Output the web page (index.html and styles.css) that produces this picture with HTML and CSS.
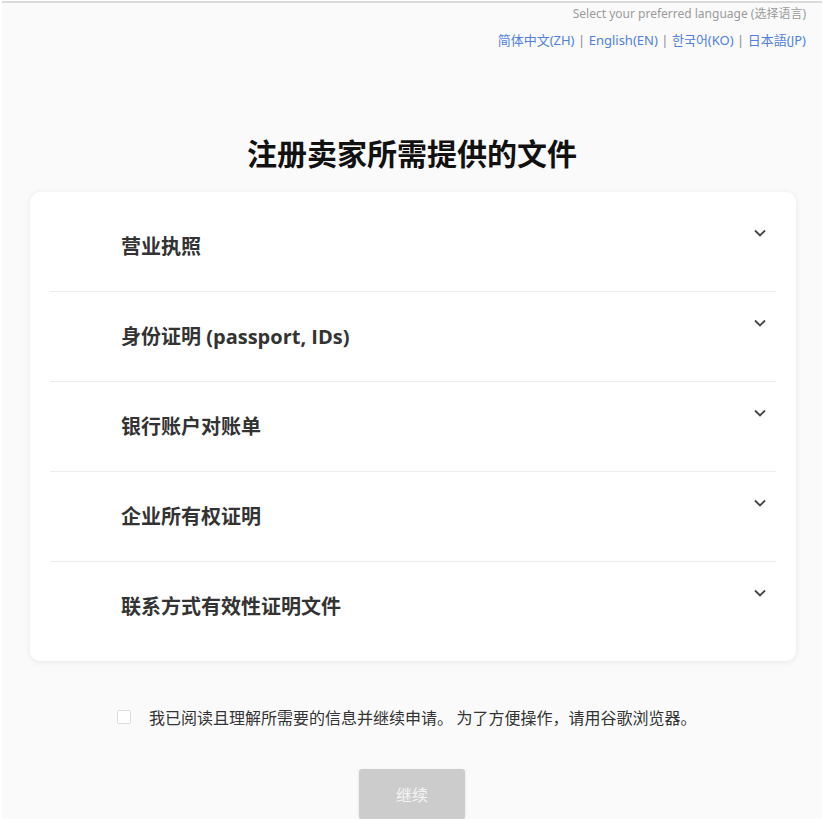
FILE: index.html
```html
<!DOCTYPE html>
<html lang="zh-CN">
<head>
<meta charset="utf-8">
<title>注册卖家所需提供的文件</title>
<link rel="stylesheet" href="styles.css">
</head>
<body>
<div class="page">
  <div class="lang">
    <div class="lang-hint">Select your preferred language (选择语言)</div>
    <div class="lang-links">
      <a class="lang-link">简体中文(ZH)</a><span class="sep">|</span><a class="lang-link">English(EN)</a><span class="sep">|</span><a class="lang-link">한국어(KO)</a><span class="sep">|</span><a class="lang-link">日本語(JP)</a>
    </div>
  </div>

  <h1 class="title">注册卖家所需提供的文件</h1>

  <div class="card">
    <div class="row"><span class="row-title">营业执照</span><svg class="chev" viewBox="0 0 12 8"><path d="M1 1.5 L6 6.5 L11 1.5" /></svg></div>
    <div class="row"><span class="row-title">身份证明 (passport, IDs)</span><svg class="chev" viewBox="0 0 12 8"><path d="M1 1.5 L6 6.5 L11 1.5" /></svg></div>
    <div class="row"><span class="row-title">银行账户对账单</span><svg class="chev" viewBox="0 0 12 8"><path d="M1 1.5 L6 6.5 L11 1.5" /></svg></div>
    <div class="row"><span class="row-title">企业所有权证明</span><svg class="chev" viewBox="0 0 12 8"><path d="M1 1.5 L6 6.5 L11 1.5" /></svg></div>
    <div class="row"><span class="row-title">联系方式有效性证明文件</span><svg class="chev" viewBox="0 0 12 8"><path d="M1 1.5 L6 6.5 L11 1.5" /></svg></div>
  </div>

  <label class="agree">
    <span class="box"></span>
    <span class="agree-text">我已阅读且理解所需要的信息并继续申请。 为了方便操作，请用谷歌浏览器。</span>
  </label>

  <div class="actions">
    <button class="btn" type="button">继续</button>
  </div>
</div>
</body>
</html>
```

FILE: styles.css
```css
html, body {
  margin: 0;
  padding: 0;
  background: #ffffff;
}

body {
  font-family: "Noto Sans", "Noto Sans CJK SC", "Noto Sans CJK KR", "Noto Sans CJK JP", sans-serif;
  color: #333;
}

.page {
  margin: 1px 0 0 2px;
  width: 820px;
  height: 818px;
  border-top: 2px solid #dadada;
  background: #fafafa;
  overflow: hidden;
  box-sizing: border-box;
}

.lang {
  text-align: right;
  padding: 3px 16px 0 0;
}

.lang-hint {
  font-size: 12px;
  line-height: 16px;
  color: #9a9a9a;
}

.lang-links {
  margin-top: 9px;
  font-size: 13px;
  line-height: 18px;
  color: #4f80dc;
}

.lang-link {
  color: #4f80dc;
  text-decoration: none;
}

.sep {
  color: #8a8a8a;
  margin: 0 3.5px;
}

.title {
  margin: 83px 0 0;
  text-align: center;
  font-family: "Noto Sans CJK SC", sans-serif;
  font-size: 30px;
  line-height: 40px;
  font-weight: 700;
  color: #111;
}

.card {
  margin: 20px 0 0 28px;
  width: 766px;
  padding: 10px 20px;
  box-sizing: border-box;
  background: #fff;
  border-radius: 10px;
  box-shadow: 0 1px 6px rgba(0, 0, 0, 0.08);
}

.row {
  height: 89px;
  border-bottom: 1px solid #ececec;
  display: flex;
  justify-content: space-between;
  align-items: flex-start;
  padding: 0 10px 0 71px;
}

.row:last-child {
  border-bottom: none;
}

.row-title {
  margin-top: 31px;
  font-family: "Open Sans", "Noto Sans CJK SC", sans-serif;
  font-size: 20px;
  line-height: 28px;
  font-weight: 700;
  color: #333;
}

.chev {
  margin-top: 27px;
  width: 12px;
  height: 8px;
  fill: none;
  stroke: #444;
  stroke-width: 1.8;
}

.agree {
  display: flex;
  align-items: center;
  margin: 45px 0 0 115px;
}

.box {
  width: 12px;
  height: 12px;
  border: 1px solid #dcdcdc;
  border-radius: 2px;
  background: #fff;
}

.agree-text {
  margin-left: 18px;
  font-family: "Noto Sans CJK SC", sans-serif;
  font-size: 16px;
  line-height: 22px;
  color: #333;
}

.actions {
  display: flex;
  justify-content: center;
  margin-top: 41px;
}

.btn {
  width: 106px;
  height: 50px;
  border: none;
  border-radius: 3px;
  background: #cccccc;
  color: #f4f4f4;
  font-family: "Noto Sans CJK SC", sans-serif;
  font-size: 16px;
  box-shadow: 0 1px 3px rgba(0, 0, 0, 0.12);
}
```
